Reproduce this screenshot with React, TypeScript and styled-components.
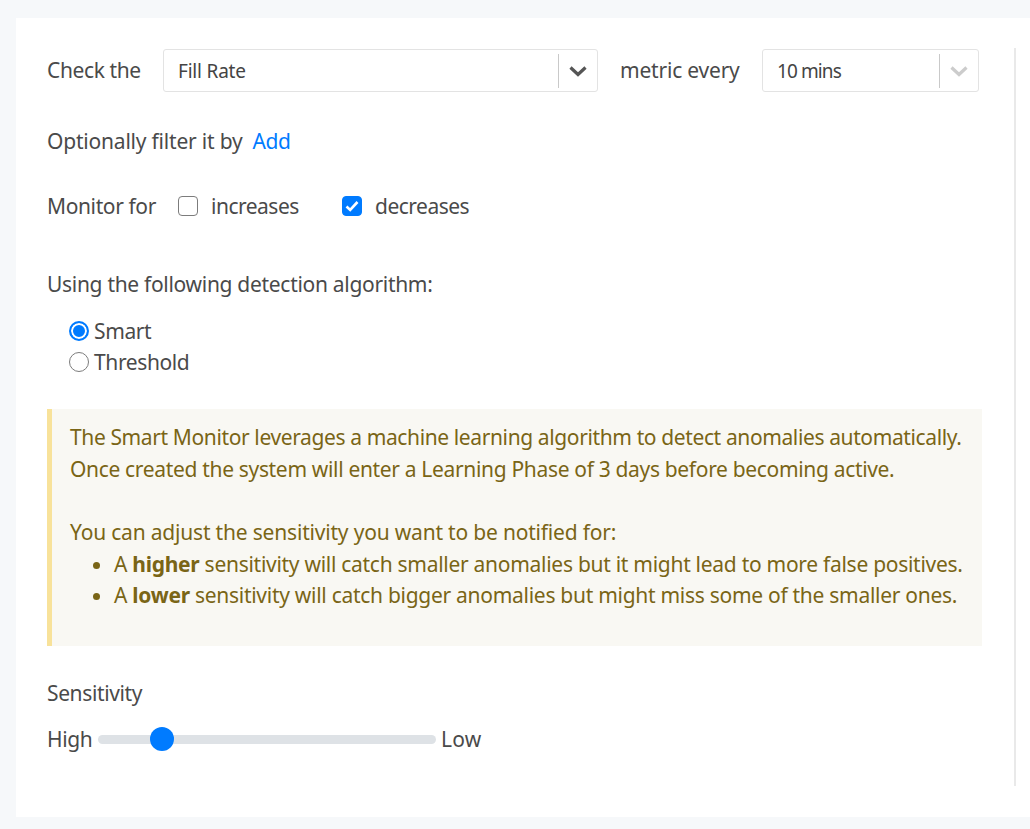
import React from 'react';
import styled, { createGlobalStyle } from 'styled-components';

const GlobalStyle = createGlobalStyle`
  html, body {
    margin: 0;
    padding: 0;
    height: 829px;
    overflow: hidden;
    background: #f6f8fa;
    font-family: "Noto Sans", "Open Sans", sans-serif;
    font-size: 21px;
    letter-spacing: -0.38px;
    color: #4a4a4a;
  }
`;

const Card = styled.div`
  margin: 18px 0 0 16px;
  height: 799px;
  background: #fff;
  padding: 30px 14px 0 31px;
  box-sizing: border-box;
`;

const Form = styled.div`
  width: 969px;
  height: 738px;
  border-right: 2px solid #e9e9e9;
  box-sizing: border-box;
`;

const Row = styled.div<{ $h: number; $mb?: number; $mt?: number; $ls?: number }>`
  display: flex;
  align-items: center;
  height: ${p => p.$h}px;
  margin-top: ${p => p.$mt ?? 0}px;
  margin-bottom: ${p => p.$mb ?? 0}px;
  white-space: nowrap;
  ${p => (p.$ls !== undefined ? `letter-spacing: ${p.$ls}px;` : '')}
`;

const Label = styled.span<{ $w?: number; $ls?: number }>`
  ${p => (p.$w ? `width: ${p.$w}px;` : '')}
  ${p => (p.$ls !== undefined ? `letter-spacing: ${p.$ls}px;` : '')}
  flex: none;
`;

const SelectBox = styled.div<{ $w: number }>`
  display: flex;
  align-items: center;
  width: ${p => p.$w}px;
  height: 43px;
  margin-top: 1px;
  flex: none;
  box-sizing: border-box;
  border: 1px solid #e3e3e3;
  border-radius: 3px;
  font-size: 19px;
  color: #444;
`;

const SelectValue = styled.span<{ $ls: number }>`
  flex: 1;
  padding-left: 14px;
  letter-spacing: ${p => p.$ls}px;
`;

const SelectArrow = styled.span<{ $muted?: boolean }>`
  display: flex;
  align-items: center;
  justify-content: center;
  width: 38px;
  height: 34px;
  border-left: 1px solid #c9c9c9;
  color: ${p => (p.$muted ? '#cccccc' : '#555555')};
`;

const MetricLabel = styled.span`
  width: 164px;
  padding-left: 22px;
  box-sizing: border-box;
  flex: none;
  letter-spacing: -0.2px;
`;

const AddLink = styled.a`
  color: #007bff;
  margin-left: 10px;
`;

const CheckBox = styled.span<{ $on?: boolean }>`
  display: flex;
  align-items: center;
  justify-content: center;
  width: 20px;
  height: 20px;
  flex: none;
  box-sizing: border-box;
  border-radius: 4px;
  border: 1px solid ${p => (p.$on ? '#007bff' : '#7c7c7c')};
  background: ${p => (p.$on ? '#007bff' : '#fff')};
`;

const CheckLabel = styled.label<{ $w: number }>`
  display: flex;
  align-items: center;
  gap: 13px;
  width: ${p => p.$w}px;
  letter-spacing: -0.5px;
`;

const RadioGroup = styled.div`
  padding-left: 22px;
  margin-bottom: 32px;
`;

const RadioRow = styled.label`
  display: flex;
  align-items: center;
  gap: 5px;
  height: 31px;
`;

const RadioDot = styled.span<{ $on?: boolean }>`
  width: 20px;
  height: 20px;
  box-sizing: border-box;
  border-radius: 50%;
  flex: none;
  border: ${p => (p.$on ? '2px solid #007bff' : '1px solid #7c7c7c')};
  background: ${p => (p.$on ? '#007bff' : '#fff')};
  box-shadow: ${p => (p.$on ? 'inset 0 0 0 2px #fff' : 'none')};
`;

const Notice = styled.div`
  width: 935px;
  height: 237px;
  box-sizing: border-box;
  background: #f9f8f3;
  border-left: 5px solid #f8e29a;
  padding: 13px 0 0 18px;
  color: #7a6516;
  line-height: 31.5px;
  white-space: nowrap;
`;

const NoticeLine = styled.div<{ $ls: number }>`
  letter-spacing: ${p => p.$ls}px;
`;

const NoticeGap = styled.div`
  height: 32px;
`;

const NoticeList = styled.ul`
  margin: 0;
  padding: 0 0 0 44px;
`;

const NoticeItem = styled.li`
  letter-spacing: -0.28px;
`;

const Slider = styled.div`
  position: relative;
  width: 338px;
  height: 9px;
  margin: 0 5px 0 6px;
  border-radius: 5px;
  background: #dee2e6;
  flex: none;
`;

const Thumb = styled.span`
  position: absolute;
  left: 52px;
  top: -8px;
  width: 24px;
  height: 24px;
  border-radius: 50%;
  background: #007bff;
`;

const Chevron = () => (
  <svg width="20" height="12" viewBox="0 0 20 12" fill="none">
    <path d="M2.5 2.5L10 9.5L17.5 2.5" stroke="currentColor" strokeWidth="3.2" />
  </svg>
);

const Tick = () => (
  <svg width="14" height="12" viewBox="0 0 14 12" fill="none">
    <path d="M1.5 6.5L5.2 10L12.5 2" stroke="#fff" strokeWidth="2.6" />
  </svg>
);

export default function App() {
  return (
    <>
      <GlobalStyle />
      <Card>
        <Form>
          <Row $h={44} $mb={29}>
            <Label $w={116}>Check the</Label>
            <SelectBox $w={435}>
              <SelectValue $ls={-0.2}>Fill Rate</SelectValue>
              <SelectArrow><Chevron /></SelectArrow>
            </SelectBox>
            <MetricLabel>metric every</MetricLabel>
            <SelectBox $w={217}>
              <SelectValue $ls={-0.9}>10 mins</SelectValue>
              <SelectArrow $muted><Chevron /></SelectArrow>
            </SelectBox>
          </Row>
          <Row $h={40} $mb={26}>
            <Label $ls={-0.2}>Optionally filter it by</Label>
            <AddLink>Add</AddLink>
          </Row>
          <Row $h={38} $mb={43}>
            <Label $w={131}>Monitor for</Label>
            <CheckLabel $w={164}><CheckBox />increases</CheckLabel>
            <CheckLabel $w={160}><CheckBox $on><Tick /></CheckBox>decreases</CheckLabel>
          </Row>
          <Row $h={32} $mb={15} $ls={-0.3}>Using the following detection algorithm:</Row>
          <RadioGroup>
            <RadioRow><RadioDot $on />Smart</RadioRow>
            <RadioRow><RadioDot />Threshold</RadioRow>
          </RadioGroup>
          <Notice>
            <NoticeLine $ls={-0.38}>The Smart Monitor leverages a machine learning algorithm to detect anomalies automatically.</NoticeLine>
            <NoticeLine $ls={-0.33}>Once created the system will enter a Learning Phase of 3 days before becoming active.</NoticeLine>
            <NoticeGap />
            <NoticeLine $ls={-0.19}>You can adjust the sensitivity you want to be notified for:</NoticeLine>
            <NoticeList>
              <NoticeItem>A <b>higher</b> sensitivity will catch smaller anomalies but it might lead to more false positives.</NoticeItem>
              <NoticeItem>A <b>lower</b> sensitivity will catch bigger anomalies but might miss some of the smaller ones.</NoticeItem>
            </NoticeList>
          </Notice>
          <Row $h={32} $mt={31} $mb={14}>Sensitivity</Row>
          <Row $h={32}>
            <Label $w={45}>High</Label>
            <Slider><Thumb /></Slider>
            <Label $ls={0.2}>Low</Label>
          </Row>
        </Form>
      </Card>
    </>
  );
}
